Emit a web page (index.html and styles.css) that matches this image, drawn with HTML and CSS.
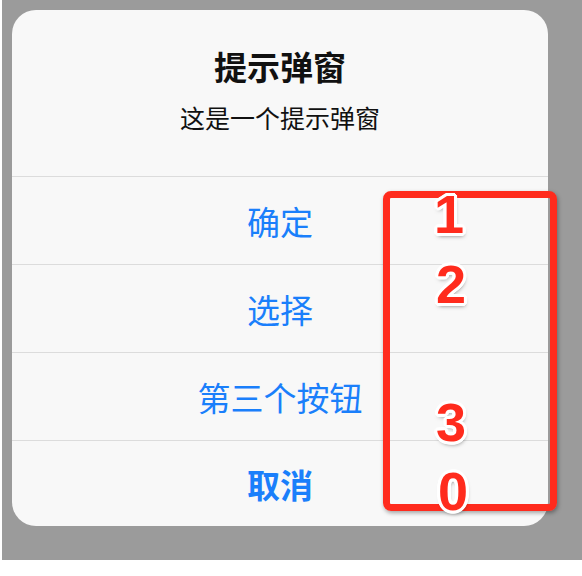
FILE: index.html
```html
<!DOCTYPE html>
<html lang="zh">
<head>
<meta charset="utf-8">
<link rel="stylesheet" href="styles.css">
</head>
<body>
<div class="stage">
  <div class="dialog">
    <div class="header">
      <div class="title">提示弹窗</div>
      <div class="message">这是一个提示弹窗</div>
    </div>
    <div class="btn">确定</div>
    <div class="btn">选择</div>
    <div class="btn">第三个按钮</div>
    <div class="btn cancel">取消</div>
  </div>
  <div class="mark-box"></div>
  <span class="num n1">1</span>
  <span class="num n2">2</span>
  <span class="num n3">3</span>
  <span class="num n0">0</span>
</div>
</body>
</html>
```
FILE: styles.css
```css
html, body {
  margin: 0;
  padding: 0;
  background: #ffffff;
}
body {
  width: 582px;
  height: 576px;
  overflow: hidden;
  font-family: "Noto Sans CJK SC", "Noto Sans", sans-serif;
}
.stage {
  position: relative;
  margin-left: 2px;
  width: 580px;
  height: 560px;
  background: #9b9b9b;
  padding: 10px 0 0 10px;
  box-sizing: border-box;
}
.dialog {
  width: 536px;
  height: 516px;
  background: #f8f8f8;
  border-radius: 24px;
  overflow: hidden;
  display: flex;
  flex-direction: column;
}
.header {
  height: 167px;
  box-sizing: border-box;
  padding-top: 36px;
  display: flex;
  flex-direction: column;
  align-items: center;
}
.title {
  font-size: 33px;
  line-height: 40px;
  font-weight: 700;
  color: #111;
}
.message {
  margin-top: 16px;
  font-size: 25px;
  line-height: 30px;
  color: #111;
}
.btn {
  height: 88px;
  flex: none;
  box-sizing: border-box;
  border-top: 1px solid #dcdcdc;
  display: flex;
  align-items: center;
  justify-content: center;
  font-size: 33px;
  color: #1a7ffb;
}
.btn.cancel {
  height: 86px;
  font-weight: 700;
}
.mark-box {
  position: absolute;
  left: 381px;
  top: 191px;
  width: 174px;
  height: 320px;
  box-sizing: border-box;
  border: 7px solid #ff2b1d;
  border-radius: 8px;
  box-shadow: 1px 2px 4px rgba(0,0,0,0.35);
}
.num {
  position: absolute;
  left: 447px;
  transform: translate(-50%, -50%);
  font-family: "Liberation Sans", Arial, sans-serif;
  font-weight: 700;
  font-size: 54px;
  line-height: 1;
  color: #ff2b1d;
  text-shadow:
    3px 0 0 #fff, -3px 0 0 #fff, 0 3px 0 #fff, 0 -3px 0 #fff,
    2px 2px 0 #fff, -2px 2px 0 #fff, 2px -2px 0 #fff, -2px -2px 0 #fff,
    3px 1px 0 #fff, -3px 1px 0 #fff, 3px -1px 0 #fff, -3px -1px 0 #fff,
    1px 3px 0 #fff, -1px 3px 0 #fff, 1px -3px 0 #fff, -1px -3px 0 #fff,
    1px 3px 4px rgba(0,0,0,0.5);
}
.n1 { top: 214px; }
.n2 { top: 284px; left: 449px; }
.n3 { top: 422px; left: 449px; }
.n0 { top: 491px; left: 451px; }
```
